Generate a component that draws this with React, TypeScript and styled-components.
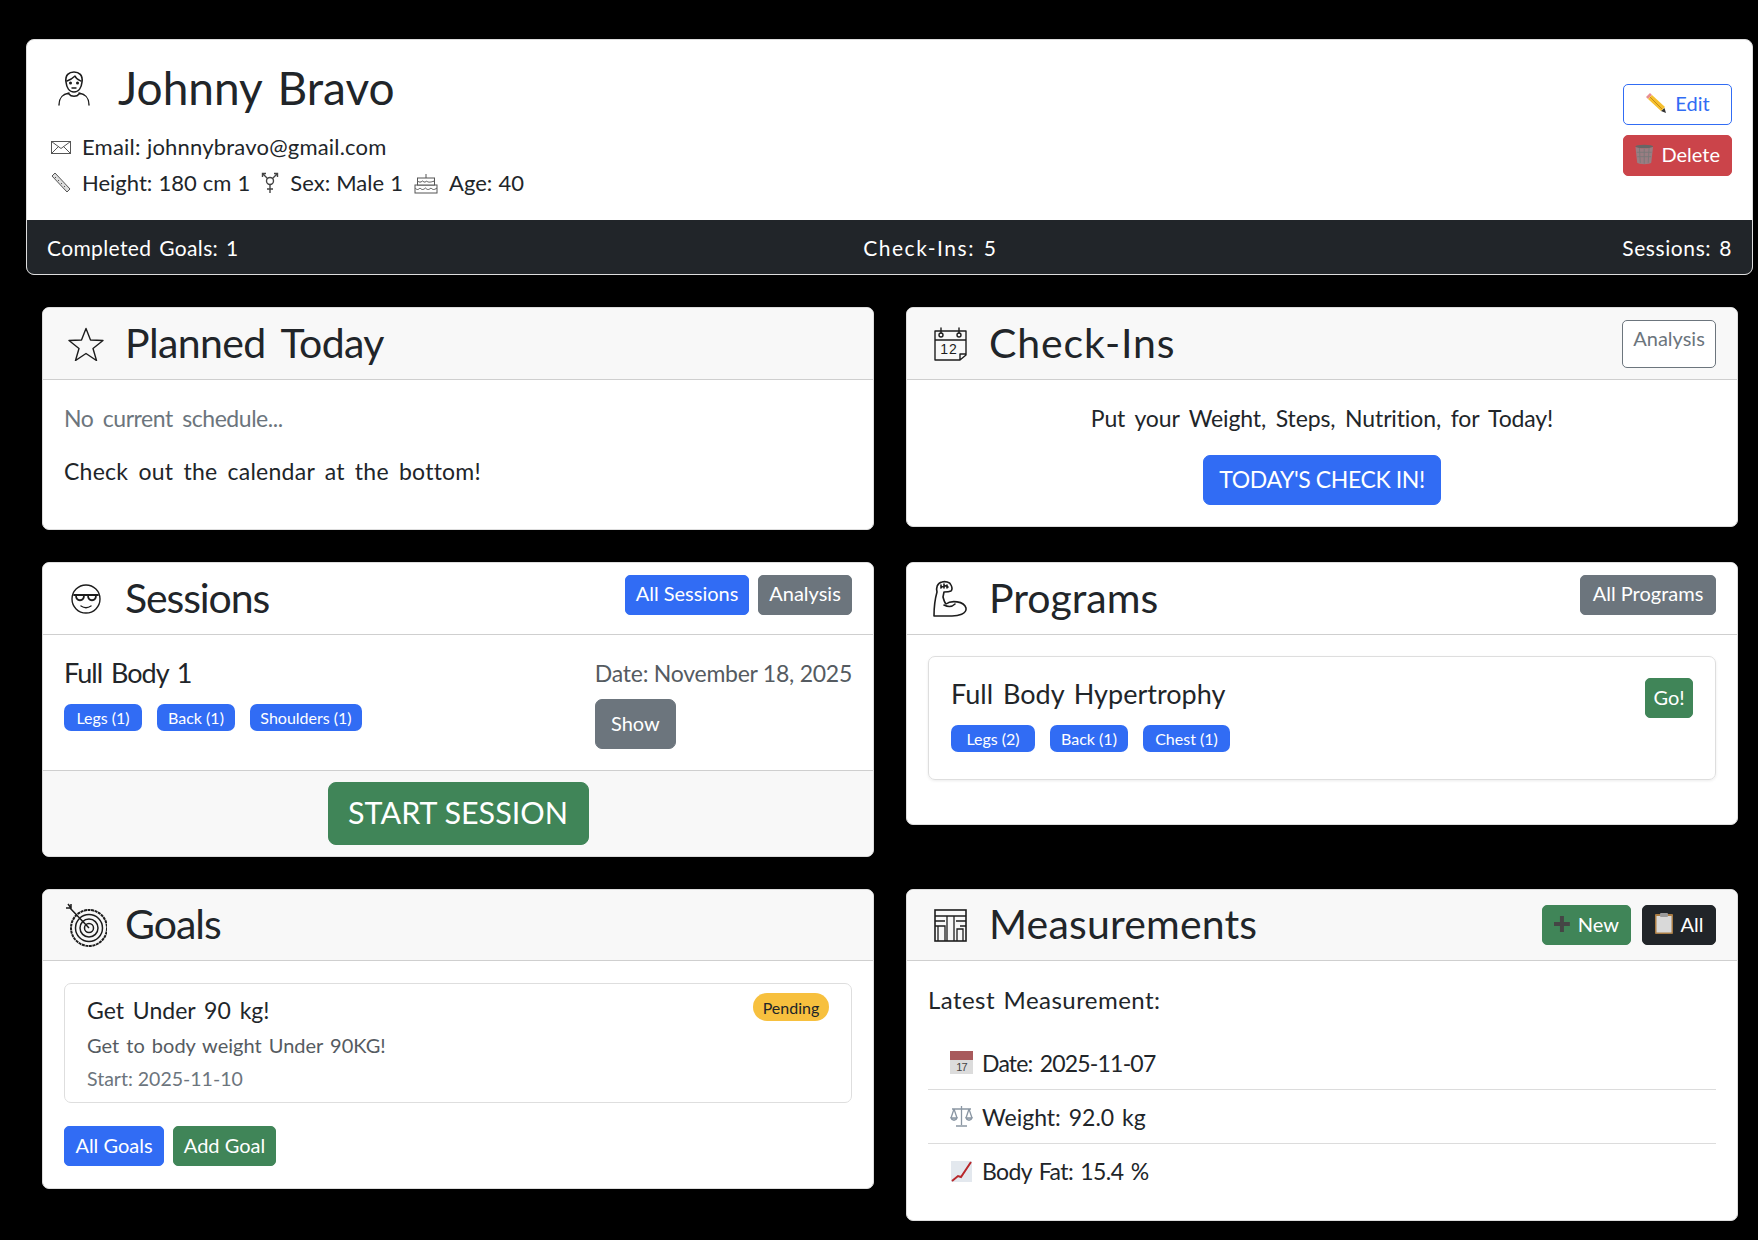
import React from "react";
import styled, { createGlobalStyle } from "styled-components";

const Color = {
  primary: "#316cf4",
  success: "#408558",
  danger: "#cb444a",
  dark: "#212529",
  secondary: "#6c757d",
  warning: "#f7c03e",
  muted: "#555b61",
  line: "#cfcfcf",
  head: "#f8f8f8",
};

const GlobalStyle = createGlobalStyle`
  html, body { margin: 0; padding: 0; background: #000; }
  body {
    font-family: "Lato", "Open Sans", sans-serif;
    color: ${Color.dark};
    -webkit-font-smoothing: antialiased;
  }
  * { box-sizing: border-box; }
`;

const Page = styled.div`
  padding: 39px 5px 20px 26px;
  width: 1758px;
  min-height: 1240px;
  background: #000;
`;

const ProfileCard = styled.section`
  background: #fff;
  border: 1px solid #ddd;
  border-radius: 8px;
  overflow: hidden;
`;
const ProfileBody = styled.div`
  display: flex;
  justify-content: space-between;
  align-items: center;
  height: 180px;
  padding: 0 20px 0 24px;
`;
const ProfileInfo = styled.div`
  padding-bottom: 4px;
`;
const ProfileName = styled.h1`
  display: flex;
  align-items: center;
  gap: 21px;
  margin: 0 0 9px;
  height: 64px;
  font-size: 46px;
  font-weight: 400;
  word-spacing: 4px;
`;
const InfoLine = styled.div`
  display: flex;
  align-items: center;
  gap: 11px;
  height: 36px;
  font-size: 22px;
  word-spacing: 0.5px;
  white-space: pre;
`;
const EmailText = styled.span`
  letter-spacing: 0.2px;
`;
const ProfileActions = styled.div`
  display: flex;
  flex-direction: column;
  gap: 10px;
`;
const ProfileFooter = styled.div`
  display: flex;
  justify-content: space-between;
  align-items: center;
  height: 54px;
  padding: 0 20px;
  background: ${Color.dark};
  color: #fff;
  font-size: 21px;
  word-spacing: 2px;
`;
const FooterItem = styled.span<{ $ls: number }>`
  letter-spacing: ${(p) => p.$ls}px;
`;

const Grid = styled.div`
  display: grid;
  grid-template-columns: 832px 832px;
  column-gap: 32px;
  row-gap: 32px;
  align-items: start;
  margin: 32px 0 0 16px;
`;
const Card = styled.section`
  background: #fff;
  border: 1px solid #ddd;
  border-radius: 7px;
  overflow: hidden;
`;
const CardHeader = styled.header<{ $plain?: boolean; $short?: boolean }>`
  display: flex;
  align-items: center;
  justify-content: space-between;
  height: ${(p) => (p.$short ? 71 : 72)}px;
  padding: 0 21px;
  background: ${(p) => (p.$plain ? "#fff" : Color.head)};
  border-bottom: 1px solid ${Color.line};
`;
const CardTitle = styled.h2<{ $ls?: number }>`
  display: flex;
  align-items: center;
  gap: 17px;
  margin: 0;
  font-size: 41px;
  font-weight: 400;
  word-spacing: 6px;
  letter-spacing: ${(p) => p.$ls ?? 0}px;
`;
const TitleText = styled.span`
  margin-bottom: 3px;
`;
const IconBox = styled.span`
  display: flex;
  justify-content: center;
  align-items: center;
  width: 44px;
  height: 44px;
`;
const HeaderActions = styled.div<{ $gap?: number; $raised?: boolean }>`
  display: flex;
  gap: ${(p) => p.$gap ?? 9}px;
  margin-bottom: ${(p) => (p.$raised ? 8 : 0)}px;
`;
const Body = styled.div`
  padding: 22px 21px;
`;
const Para = styled.p<{ $muted?: boolean; $center?: boolean; $ls: number }>`
  margin: 0 0 20px;
  font-size: 23px;
  line-height: 33px;
  word-spacing: 4px;
  letter-spacing: ${(p) => p.$ls}px;
  color: ${(p) => (p.$muted ? Color.secondary : Color.dark)};
  text-align: ${(p) => (p.$center ? "center" : "left")};
  &:last-child { margin-bottom: 19px; }
`;
const Centered = styled.div`
  display: flex;
  justify-content: center;
  margin-bottom: -1px;
`;

const Button = styled.button<{
  $bg?: string;
  $outline?: string;
  $h?: number;
  $w?: number;
  $fs?: number;
  $r?: number;
  $ls?: number;
}>`
  display: inline-flex;
  align-items: center;
  justify-content: center;
  gap: 8px;
  height: ${(p) => p.$h ?? 40}px;
  width: ${(p) => (p.$w ? `${p.$w}px` : "auto")};
  padding: 0 11px 3px;
  border-radius: ${(p) => p.$r ?? 5}px;
  border: 1px solid ${(p) => p.$outline ?? p.$bg ?? "transparent"};
  background: ${(p) => p.$bg ?? "#fff"};
  color: ${(p) => p.$outline ?? "#fff"};
  font-family: inherit;
  font-size: ${(p) => p.$fs ?? 20}px;
  letter-spacing: ${(p) => p.$ls ?? 0}px;
  white-space: nowrap;
`;
const AnalysisOutline = styled(Button)`
  align-items: flex-start;
  padding-top: 5px;
`;
const Badges = styled.div`
  display: flex;
  gap: 15px;
`;
const Badge = styled.span<{ $w: number }>`
  display: flex;
  align-items: center;
  justify-content: center;
  width: ${(p) => p.$w}px;
  height: 27px;
  border-radius: 7px;
  background: ${Color.primary};
  color: #fff;
  font-size: 16px;
`;

const SessionBody = styled.div`
  display: flex;
  justify-content: space-between;
  height: 135px;
  padding: 22px 21px 0;
`;
const ItemTitle = styled.h3<{ $gap: number; $ls?: number }>`
  margin: 0 0 ${(p) => p.$gap}px;
  font-size: 27px;
  line-height: 32px;
  font-weight: 400;
  word-spacing: 3px;
  letter-spacing: ${(p) => p.$ls ?? 0}px;
`;
const SessionSide = styled.div`
  display: flex;
  flex-direction: column;
  align-items: flex-start;
  gap: 10px;
`;
const SessionDate = styled.div`
  font-size: 23px;
  line-height: 32px;
  letter-spacing: -0.25px;
  color: ${Color.muted};
`;
const CardFooter = styled.footer`
  display: flex;
  justify-content: center;
  padding: 11px 0;
  background: ${Color.head};
  border-top: 1px solid ${Color.line};
`;

const InnerCard = styled.div`
  display: flex;
  justify-content: space-between;
  align-items: flex-start;
  border: 1px solid #dedede;
  border-radius: 7px;
`;
const ProgramCard = styled(InnerCard)`
  height: 124px;
  padding: 21px 22px;
  margin: -1px 0 22px;
  box-shadow: 0 1px 3px rgba(0, 0, 0, 0.08);
`;
const GoalCard = styled(InnerCard)`
  height: 120px;
  padding: 9px 22px;
  margin-bottom: 23px;
`;
const GoalTitle = styled.div`
  font-size: 23px;
  line-height: 34.5px;
  word-spacing: 3px;
`;
const GoalDesc = styled.div`
  font-size: 20px;
  line-height: 34.5px;
  word-spacing: 2px;
  color: ${Color.muted};
`;
const GoalStart = styled.div`
  font-size: 19.5px;
  line-height: 34.5px;
  color: ${Color.secondary};
`;
const PendingBadge = styled.span`
  display: flex;
  align-items: center;
  justify-content: center;
  width: 76px;
  height: 28px;
  border-radius: 14px;
  background: ${Color.warning};
  font-size: 16px;
`;
const LatestTitle = styled.div`
  font-size: 24px;
  line-height: 36px;
  margin: -1px 0 18px;
  word-spacing: 2px;
  letter-spacing: 0.45px;
`;
const MeasureRow = styled.div<{ $ls: number }>`
  display: flex;
  align-items: center;
  gap: 9px;
  height: 54px;
  padding-left: 22px;
  font-size: 23px;
  word-spacing: 2px;
  letter-spacing: ${(p) => p.$ls}px;
  border-bottom: 1px solid #dcdcdc;
  &:last-child { border-bottom: 0; }
`;

const Line = { fill: "none", stroke: "#1d1d1d", strokeWidth: 1.4, strokeLinecap: "round", strokeLinejoin: "round" } as const;

const PersonIcon = () => (
  <svg width="46" height="36" viewBox="0 0 46 36" {...Line}>
    <path d="M15 12c-1-7 3-10 8-10s9 3 8 10c-.5 5-3 10-8 10s-7.500-5-8-10z" strokeWidth={1.6} />
    <path d="M16 11c3-1 6-3 8-5 1 3 4 4 6 5" />
    <circle cx="19.500" cy="13" r=".8" fill="#1d1d1d" />
    <circle cx="26.500" cy="13" r=".8" fill="#1d1d1d" />
    <path d="M21 18h4M18 23c-5 1-10 3-10 12M28 23c5 1 10 3 10 12M18 24c2 3 8 3 10 0" />
  </svg>
);
const MailIcon = () => (
  <svg width="20" height="16" viewBox="0 0 20 16" fill="none" stroke="#555" strokeWidth="1">
    <rect x=".5" y="2.500" width="19" height="12" />
    <path d="M.5 2.500l9.500 7 9.500-7M.5 14.500l7-7M19.500 14.500l-7-7" />
  </svg>
);
const RulerIcon = () => (
  <svg width="20" height="22" viewBox="0 0 20 22" fill="#ddd" stroke="#555" strokeWidth="1">
    <path d="M1 4l3-3 15 16-3 3z" />
    <path d="M5 5l-1 1M8 8l-1 1M11 11l-1 1M14 14l-1 1" />
  </svg>
);
const GenderIcon = () => (
  <svg width="18" height="22" viewBox="0 0 18 22" fill="none" stroke="#444" strokeWidth="1.4">
    <circle cx="9" cy="9" r="3.500" />
    <path d="M9 12.500V21M6 17h6M6.500 6.500L2 2M11.500 6.500L16 2M1.500 5V1.500H5M16.500 5V1.500H13" />
  </svg>
);
const CakeIcon = () => (
  <svg width="24" height="22" viewBox="0 0 24 22" fill="#fff" stroke="#555" strokeWidth="1">
    <rect x="1" y="13" width="22" height="8" />
    <rect x="3.500" y="6" width="17" height="7" />
    <path d="M1 16c2 2 3 2 5 0 2 2 3 2 5.500 0 2 2 3 2 5.500 0 2 2 3 2 6 0M3.500 9c2 1.500 3 1.500 5 0 2 1.500 3 1.500 4 0 2 1.500 3 1.500 8 0M12 6V2" />
  </svg>
);
const PencilEmoji = () => (
  <svg width="22" height="22" viewBox="0 0 22 22">
    <path d="M5 1l-4 4 2 2 4-4z" fill="#e88f92" />
    <path d="M7 3L3 7l13 12 4-4z" fill="#f5bf2e" />
    <path d="M16 19l5 2-1.500-5z" fill="#333" />
    <path d="M5 5l12 12" stroke="#c78c12" strokeWidth="1" />
  </svg>
);
const TrashEmoji = () => (
  <svg width="21" height="23" viewBox="0 0 21 23">
    <ellipse cx="10.500" cy="2.500" rx="10" ry="2" fill="#666" />
    <path d="M.5 3l2 18c1 2 15 2 16 0l2-18c-4 2-16 2-20 0z" fill="#9a7d82" />
    <path d="M5 4l1 17M10.500 5v17M16 4l-1 17M2 9h17M2.500 14h16" stroke="#777" strokeWidth="1" />
  </svg>
);
const PlusEmoji = () => (
  <svg width="16" height="16" viewBox="0 0 16 16">
    <path d="M6 0h4v6h6v4h-6v6H6v-6H0V6h6z" fill="#454545" />
  </svg>
);
const ClipboardEmoji = () => (
  <svg width="18" height="21" viewBox="0 0 18 21">
    <rect width="18" height="20" y="1" rx="1" fill="#a97c44" />
    <rect x="1.500" y="3" width="15" height="16.500" fill="#d9d9d9" />
    <rect x="5" y="0" width="8" height="4" rx="1" fill="#9b9b9b" />
  </svg>
);
const CalendarEmoji = () => (
  <svg width="23" height="23" viewBox="0 0 23 23">
    <rect width="23" height="23" fill="#dcdcdc" />
    <rect width="23" height="9" fill="#a85a5c" />
    <text x="11.500" y="20" textAnchor="middle" fontSize="11" fontFamily="Liberation Sans" fill="#444">17</text>
  </svg>
);
const ScalesEmoji = () => (
  <svg width="23" height="23" viewBox="0 0 23 23" fill="none" stroke="#8a96a3" strokeWidth="1.300">
    <path d="M11.500 1v19M6 21h11M2 4h19M4 4l-3 9M4 4l3 9M19 4l-3 9M19 4l3 9" />
    <path d="M1 13c1 3 5 3 6 0zM16 13c1 3 5 3 6 0z" fill="#c9d1d9" />
  </svg>
);
const ChartEmoji = () => (
  <svg width="23" height="23" viewBox="0 0 23 23">
    <rect x="1" y="1" width="21" height="21" fill="#e3e8ee" />
    <path d="M2 21l6-5 3 1 10-15" fill="none" stroke="#b8282c" strokeWidth="2" />
  </svg>
);
const StarIcon = () => (
  <svg width="36" height="34" viewBox="0 0 36 34" {...Line}>
    <path d="M18 1.500l4.500 11.500 12.500.5-10 8 3.500 12-10.500-7-10.500 7 3.500-12-10-8 12.500-.5z" />
  </svg>
);
const CalendarIcon = () => (
  <svg width="33" height="34" viewBox="0 0 33 34" {...Line}>
    <path d="M1 4h31v24l-6 5H1zM1 13h31M26 33v-6h6" />
    <circle cx="7" cy="8" r="2" />
    <circle cx="25" cy="8" r="2" />
    <path d="M7 1v5M25 1v5" />
    <text x="15" y="27" textAnchor="middle" fontSize="14" fontFamily="Liberation Sans" stroke="none" fill="#1d1d1d">12</text>
  </svg>
);
const GlassesIcon = () => (
  <svg width="30" height="30" viewBox="0 0 30 30" {...Line}>
    <circle cx="15" cy="15" r="14" />
    <path d="M3 11h24" strokeWidth={1.800} />
    <path d="M5 11c0 7 8 7 8 0zM17 11c0 7 8 7 8 0z" strokeWidth={1.800} />
    <path d="M10 22c3 2 7 2 10 0" />
  </svg>
);
const MuscleIcon = () => (
  <svg width="36" height="38" viewBox="0 0 36 38" {...Line} strokeWidth={1.600}>
    <path d="M2 36c0-9 1-17 3-24-1-4 0-9 5-10 3-1 8 0 9 3 1 2 2 4 0 6-2 1-5 1-7 1l-1 5c1 4 2 6 3 7 5-4 18-3 20 4 1 6-8 8-14 8z" />
    <path d="M9 8c1-2 6-3 7-1M12 25c4 2 8 2 11-1M9 5v3M12 4v4M15 5v3" />
  </svg>
);
const TargetIcon = () => (
  <svg width="42" height="44" viewBox="0 0 42 44" fill="none" stroke="#1d1d1d">
    <circle cx="24" cy="25" r="18" strokeWidth="2" strokeDasharray="3 .6" />
    <circle cx="24" cy="25" r="13.500" strokeWidth="1.500" />
    <circle cx="24" cy="25" r="9" strokeWidth="1.500" />
    <circle cx="24" cy="25" r="4.500" strokeWidth="1.500" />
    <path d="M24 25L5 5M1 5h5V1M3 1l3 4" strokeWidth="1.500" />
  </svg>
);
const MeasureIcon = () => (
  <svg width="33" height="33" viewBox="0 0 33 33" fill="none" stroke="#1d1d1d" strokeWidth="1.300">
    <rect x="1" y="1" width="31" height="31" strokeWidth="1.600" />
    <path d="M1 7h31M1 12h10M22 12h10M1 17h6M26 17h6M4 32V17h7v15M13 32V7h7v25M23 32V20h6v12" />
  </svg>
);

const App = () => (
  <Page>
    <GlobalStyle />
    <ProfileCard>
      <ProfileBody>
        <ProfileInfo>
          <ProfileName>
            <PersonIcon />
            Johnny Bravo
          </ProfileName>
          <InfoLine>
            <MailIcon />
            <EmailText>Email: johnnybravo@gmail.com</EmailText>
          </InfoLine>
          <InfoLine>
            <RulerIcon />
            <span>Height: 180 cm 1</span>
            <GenderIcon />
            <span>Sex: Male 1</span>
            <CakeIcon />
            <span>Age: 40</span>
          </InfoLine>
        </ProfileInfo>
        <ProfileActions>
          <Button $outline={Color.primary} $w={109} $h={41}>
            <PencilEmoji />
            Edit
          </Button>
          <Button $bg={Color.danger} $w={109} $h={41}>
            <TrashEmoji />
            Delete
          </Button>
        </ProfileActions>
      </ProfileBody>
      <ProfileFooter>
        <FooterItem $ls={0.37}>Completed Goals: 1</FooterItem>
        <FooterItem $ls={1.5}>Check-Ins: 5</FooterItem>
        <FooterItem $ls={0.6}>Sessions: 8</FooterItem>
      </ProfileFooter>
    </ProfileCard>

    <Grid>
      <Card>
        <CardHeader>
          <CardTitle $ls={-0.6}>
            <IconBox><StarIcon /></IconBox>
            <TitleText>Planned Today</TitleText>
          </CardTitle>
        </CardHeader>
        <Body>
          <Para $muted $ls={-0.45}>No current schedule...</Para>
          <Para $ls={0.25}>Check out the calendar at the bottom!</Para>
        </Body>
      </Card>

      <Card>
        <CardHeader>
          <CardTitle $ls={0.9}>
            <IconBox><CalendarIcon /></IconBox>
            <TitleText>Check-Ins</TitleText>
          </CardTitle>
          <AnalysisOutline $outline={Color.secondary} $w={94} $h={48}>Analysis</AnalysisOutline>
        </CardHeader>
        <Body>
          <Para $center $ls={-0.13}>Put your Weight, Steps, Nutrition, for Today!</Para>
          <Centered>
            <Button $bg={Color.primary} $w={238} $h={50} $fs={23} $r={7} $ls={-0.4}>TODAY'S CHECK IN!</Button>
          </Centered>
        </Body>
      </Card>

      <Card>
        <CardHeader $plain>
          <CardTitle $ls={-1.1}>
            <IconBox><GlassesIcon /></IconBox>
            <TitleText>Sessions</TitleText>
          </CardTitle>
          <HeaderActions $raised>
            <Button $bg={Color.primary} $w={124}>All Sessions</Button>
            <Button $bg={Color.secondary} $w={94}>Analysis</Button>
          </HeaderActions>
        </CardHeader>
        <SessionBody>
          <div>
            <ItemTitle $gap={15} $ls={-1}>Full Body 1</ItemTitle>
            <Badges>
              <Badge $w={78}>Legs (1)</Badge>
              <Badge $w={78}>Back (1)</Badge>
              <Badge $w={112}>Shoulders (1)</Badge>
            </Badges>
          </div>
          <SessionSide>
            <SessionDate>Date: November 18, 2025</SessionDate>
            <Button $bg={Color.secondary} $w={81} $h={50} $r={7}>Show</Button>
          </SessionSide>
        </SessionBody>
        <CardFooter>
          <Button $bg={Color.success} $w={261} $h={63} $fs={30.5} $r={8}>START SESSION</Button>
        </CardFooter>
      </Card>

      <Card>
        <CardHeader $plain>
          <CardTitle>
            <IconBox><MuscleIcon /></IconBox>
            <TitleText>Programs</TitleText>
          </CardTitle>
          <HeaderActions $raised>
            <Button $bg={Color.secondary} $w={136}>All Programs</Button>
          </HeaderActions>
        </CardHeader>
        <Body>
          <ProgramCard>
            <div>
              <ItemTitle $gap={15}>Full Body Hypertrophy</ItemTitle>
              <Badges>
                <Badge $w={84}>Legs (2)</Badge>
                <Badge $w={78}>Back (1)</Badge>
                <Badge $w={87}>Chest (1)</Badge>
              </Badges>
            </div>
            <Button $bg={Color.success} $w={48}>Go!</Button>
          </ProgramCard>
        </Body>
      </Card>

      <Card>
        <CardHeader $short>
          <CardTitle $ls={-1}>
            <IconBox><TargetIcon /></IconBox>
            <TitleText>Goals</TitleText>
          </CardTitle>
        </CardHeader>
        <Body>
          <GoalCard>
            <div>
              <GoalTitle>Get Under 90 kg!</GoalTitle>
              <GoalDesc>Get to body weight Under 90KG!</GoalDesc>
              <GoalStart>Start: 2025-11-10</GoalStart>
            </div>
            <PendingBadge>Pending</PendingBadge>
          </GoalCard>
          <HeaderActions>
            <Button $bg={Color.primary} $w={100}>All Goals</Button>
            <Button $bg={Color.success} $w={103}>Add Goal</Button>
          </HeaderActions>
        </Body>
      </Card>

      <Card>
        <CardHeader $short>
          <CardTitle $ls={0.17}>
            <IconBox><MeasureIcon /></IconBox>
            <TitleText>Measurements</TitleText>
          </CardTitle>
          <HeaderActions $gap={11}>
            <Button $bg={Color.success} $w={89}>
              <PlusEmoji />
              New
            </Button>
            <Button $bg={Color.dark} $w={74}>
              <ClipboardEmoji />
              All
            </Button>
          </HeaderActions>
        </CardHeader>
        <Body>
          <LatestTitle>Latest Measurement:</LatestTitle>
          <MeasureRow $ls={-0.8}><CalendarEmoji />Date: 2025-11-07</MeasureRow>
          <MeasureRow $ls={0}><ScalesEmoji />Weight: 92.0 kg</MeasureRow>
          <MeasureRow $ls={-0.6}><ChartEmoji />Body Fat: 15.4 %</MeasureRow>
        </Body>
      </Card>
    </Grid>
  </Page>
);

export default App;
